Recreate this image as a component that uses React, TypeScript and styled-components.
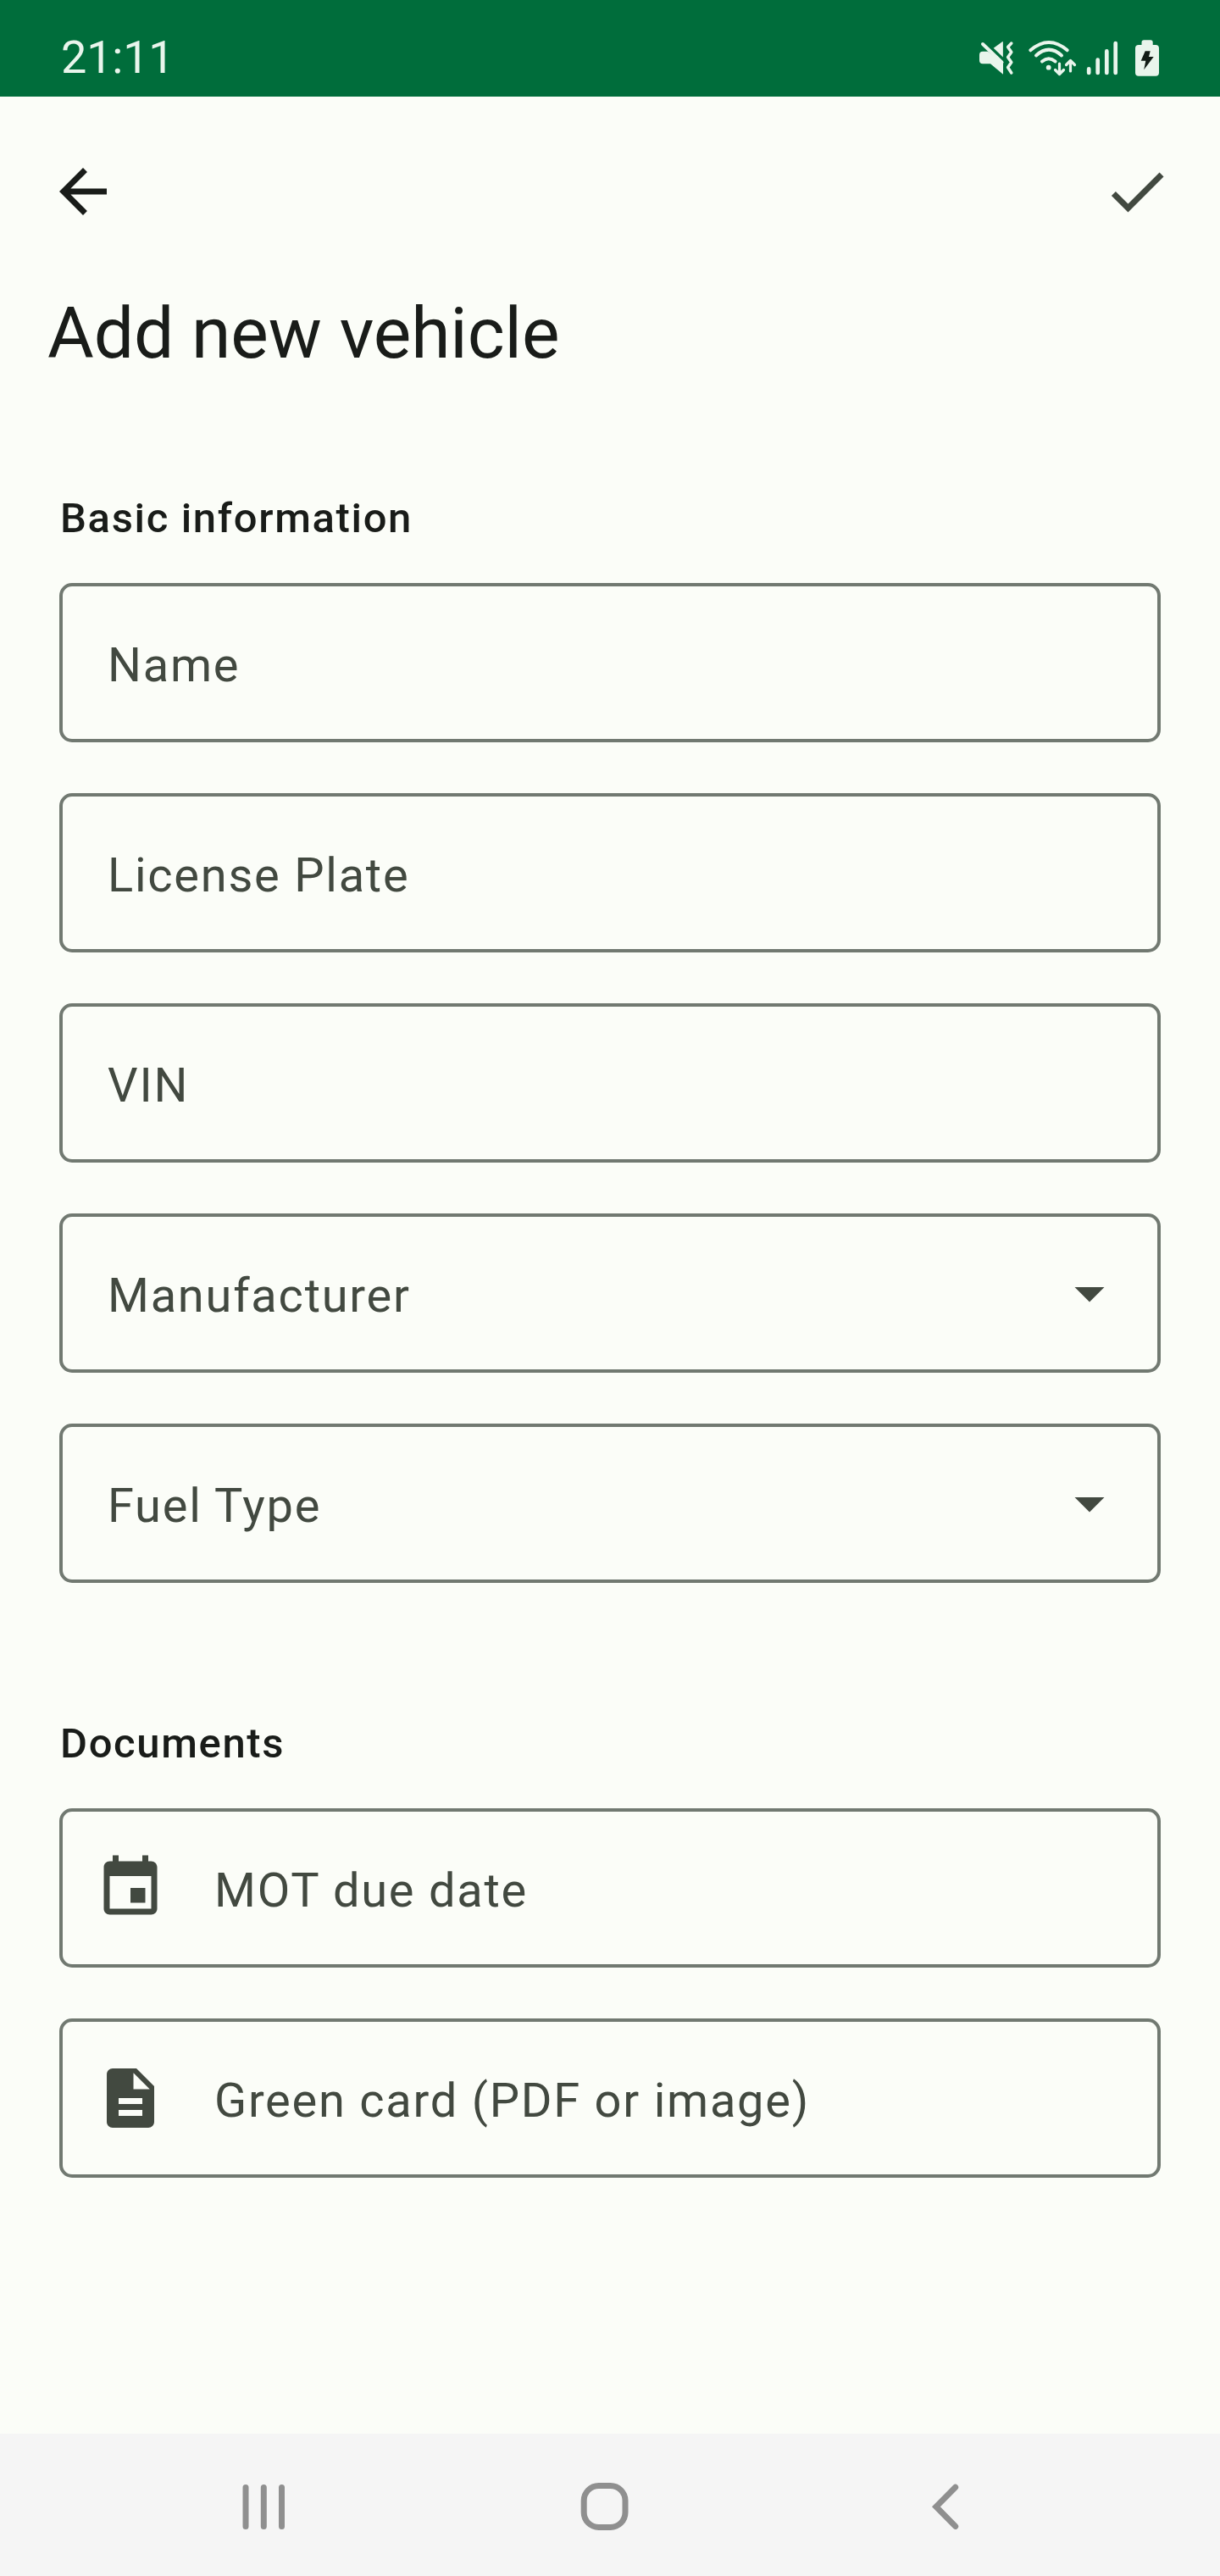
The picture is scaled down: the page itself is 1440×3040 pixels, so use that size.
import React from 'react';
import styled, { createGlobalStyle } from 'styled-components';

const Global = createGlobalStyle`
  html, body { margin: 0; padding: 0; background: #fbfdf8; }
  *, *::before, *::after { box-sizing: border-box; }
`;

const Screen = styled.div`
  width: 1440px;
  height: 3040px;
  display: flex;
  flex-direction: column;
  background: #fbfdf8;
  color: #191c19;
  font-family: Roboto, 'Liberation Sans', sans-serif;
`;

const StatusBar = styled.header`
  height: 114px;
  flex: none;
  display: flex;
  align-items: flex-start;
  justify-content: space-between;
  padding: 0 40px 0 72px;
  background: #006d3b;
  color: #e9f5ec;
`;

const Clock = styled.time`
  margin-top: 36px;
  font-size: 54px;
  line-height: 64px;
  letter-spacing: -0.2px;
`;

const StatusIcons = styled.svg`
  width: 260px;
  height: 84px;
  display: block;
  margin-top: 30px;
`;

const TopBar = styled.nav`
  height: 231px;
  flex: none;
  display: flex;
  align-items: flex-start;
  justify-content: space-between;
  padding: 70px 56px 0;
`;

const IconButton = styled.button`
  display: flex;
  padding: 0;
  border: 0;
  background: none;
  color: ${(p: { $tone: string }) => p.$tone};
`;

const Glyph = styled.svg`
  width: 84px;
  height: 84px;
  flex: none;
  display: block;
  fill: currentColor;
`;

const Title = styled.h1`
  margin: 0 56px;
  height: 100px;
  font-size: 84px;
  line-height: 98px;
  font-weight: 400;
  letter-spacing: -0.08px;
`;

const Form = styled.main`
  flex: 1;
  padding: 0 70px;
`;

const Section = styled.section`
  padding-top: ${(p: { $top: number }) => p.$top}px;
`;

const SectionTitle = styled.h2`
  margin: 0 0 47px 1px;
  font-size: 49px;
  line-height: 58px;
  font-weight: 500;
  letter-spacing: 1.65px;
`;

const Fields = styled.div`
  display: flex;
  flex-direction: column;
  gap: 60px;
`;

const FieldBox = styled.div`
  height: 188px;
  display: flex;
  align-items: center;
  border: 4px solid #717971;
  border-radius: 15px;
  padding: 0 38px;
  color: #424940;
`;

const Label = styled.span`
  flex: 1;
  padding-top: 6px;
  margin-left: ${(p: { $icon: boolean }) => (p.$icon ? 57 : 15)}px;
  font-size: 56px;
  line-height: 66px;
  letter-spacing: 1.75px;
`;

const NavBar = styled.footer`
  height: 168px;
  flex: none;
  display: flex;
  align-items: center;
  background: #f5f5f5;
`;

const NavIcon = styled.svg`
  width: 60px;
  height: 60px;
  display: block;
  margin-left: ${(p: { $gap: number }) => p.$gap}px;
  margin-top: 4px;
  fill: none;
  stroke: #8f8f8f;
  stroke-width: 7;
`;

const paths = {
  back: 'M20 11H7.83l5.59-5.59L12 4l-8 8 8 8 1.41-1.41L7.83 13H20v-2z',
  check: 'M9 16.17L4.83 12l-1.42 1.41L9 19 21 7l-1.41-1.41z',
  down: 'M7 10l5 5 5-5z',
  event:
    'M17 12h-5v5h5v-5zM16 1v2H8V1H6v2H5c-1.11 0-1.99.9-1.99 2L3 19c0 1.1.89 2 2 2h14c1.1 0 2-.9 2-2V5c0-1.1-.9-2-2-2h-1V1h-2zm3 18H5V8h14v11z',
  file: 'M14 2H6c-1.1 0-1.99.9-1.99 2L4 20c0 1.1.89 2 1.99 2H18c1.1 0 2-.9 2-2V8l-6-6zm2 16H8v-2h8v2zm0-4H8v-2h8v2zm-3-5V3.5L18.5 9H13z',
};

type IconName = keyof typeof paths;

const Icon = ({ name }: { name: IconName }) => (
  <Glyph viewBox="0 0 24 24" aria-hidden="true">
    <path d={paths[name]} />
  </Glyph>
);

const Field = ({ label, icon, select }: { label: string; icon?: IconName; select?: boolean }) => (
  <FieldBox>
    {icon && <Icon name={icon} />}
    <Label $icon={!!icon}>{label}</Label>
    {select && <Icon name="down" />}
  </FieldBox>
);

const Status = () => (
  <StatusIcons viewBox="0 0 260 84" fill="none" stroke="#e9f5ec" strokeLinecap="round" strokeLinejoin="round">
    <path d="M20 30.700h6L44 44v13.700L29 45.300h-9q-4 0-4-4v-6.600q0-4 4-4z" fill="#e9f5ec" stroke="none" />
    <path d="M32.700 26.700L43 19.200q.900-.500.900.500v17.800z" fill="#e9f5ec" stroke="none" />
    <path d="M20 22l22.500 21.500" strokeWidth="4" />
    <path d="M53.800 21l-4.200 4.500 4.200 6-4.200 6 4.200 6-4.200 6 4.200 6.500" strokeWidth="3.500" />
    <path d="M76.300 29.300q21.700-18.600 43.400 0M83 35.500q15-13.600 30 0M90 42.500q7.800-6.400 15.600 0" strokeWidth="4" />
    <circle cx="97.700" cy="49.700" r="2.900" fill="#e9f5ec" stroke="none" />
    <path d="M110.500 45v12m-5-4.500l5 5 5-5M123.500 54V42m-5 4.500l5-5 5 5" strokeWidth="3.200" />
    <path d="M145.200 51.400V56M155.700 40.700V56M166.300 30.400V56M176.700 21v35" strokeWidth="4.700" />
    <path d="M207.500 23v-3q0-2.700 2.700-2.700h7.800q2.700 0 2.700 2.700v3h3.300q4 0 4 4v28.700q0 4-4 4h-20q-4 0-4-4V27q0-4 4-4z" fill="#e9f5ec" stroke="none" />
    <path d="M211.700 30.300h6l-1.700 6.700h5.700L210.200 52.300 212.300 41.700h-5.600z" fill="#111c15" stroke="none" />
  </StatusIcons>
);

export default function App() {
  return (
    <>
      <Global />
      <Screen>
        <StatusBar>
          <Clock>21:11</Clock>
          <Status />
        </StatusBar>
        <TopBar>
          <IconButton $tone="#191c19" aria-label="Back">
            <Icon name="back" />
          </IconButton>
          <IconButton $tone="#424940" aria-label="Save">
            <Icon name="check" />
          </IconButton>
        </TopBar>
        <Title>Add new vehicle</Title>
        <Form>
          <Section $top={138}>
            <SectionTitle>Basic information</SectionTitle>
            <Fields>
              <Field label="Name" />
              <Field label="License Plate" />
              <Field label="VIN" />
              <Field label="Manufacturer" select />
              <Field label="Fuel Type" select />
            </Fields>
          </Section>
          <Section $top={161}>
            <SectionTitle>Documents</SectionTitle>
            <Fields>
              <Field label="MOT due date" icon="event" />
              <Field label="Green card (PDF or image)" icon="file" />
            </Fields>
          </Section>
        </Form>
        <NavBar>
          <NavIcon $gap={281} viewBox="281 2928 60 60" strokeLinecap="round">
            <path d="M290 2935.500v46M311.300 2935.500v46M332.500 2935.500v46" />
          </NavIcon>
          <NavIcon $gap={342} viewBox="683 2928 60 60">
            <rect x="689.200" y="2933.500" width="48.800" height="49" rx="17.500" />
          </NavIcon>
          <NavIcon $gap={342} viewBox="1085 2928 60 60" strokeLinecap="round" strokeLinejoin="miter">
            <path d="M1127.700 2935.200L1104.900 2958.300 1127.700 2981.400" />
          </NavIcon>
        </NavBar>
      </Screen>
    </>
  );
}
